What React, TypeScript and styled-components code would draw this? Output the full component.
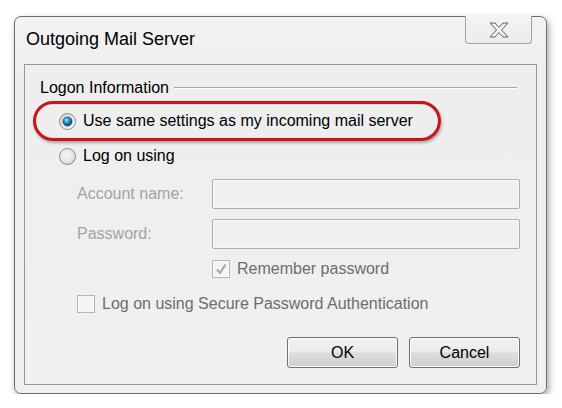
import React, { ReactElement } from 'react';
import styled, { createGlobalStyle } from 'styled-components';

const GlobalStyle = createGlobalStyle`
  body {
    margin: 0;
    background: #ffffff;
    font-family: "Liberation Sans", Arial, sans-serif;
    font-size: 16px;
    color: #000;
  }
`;

const Page = styled.div`
  padding: 16px 0 0 14px;
`;

const Window = styled.div`
  width: 533px;
  height: 378px;
  box-sizing: border-box;
  border: 1px solid #6c6c6c;
  border-radius: 7px;
  background: linear-gradient(#f3f3f3, #eeeeee 60px, #f0f0f0);
  box-shadow: 2px 3px 7px rgba(0, 0, 0, 0.35);
  display: flex;
  flex-direction: column;
  padding: 0 9px 8px 9px;
`;

const TitleBar = styled.div`
  height: 47px;
  display: flex;
  align-items: flex-start;
  justify-content: space-between;
`;

const Title = styled.div`
  margin: 11px 0 0 2px;
  font-size: 18px;
  line-height: 22px;
`;

const CloseButton = styled.div`
  width: 67px;
  height: 28px;
  margin: -1px 5px 0 0;
  box-sizing: border-box;
  border: 1px solid #a2a2a2;
  border-top: none;
  border-radius: 0 0 4px 4px;
  background: linear-gradient(#f4f4f4, #ececec);
  display: flex;
  align-items: center;
  justify-content: center;
`;

const Panel = styled.div`
  flex: 1;
  border: 1px solid #979797;
  display: flex;
  flex-direction: column;
`;

const GroupHeader = styled.div`
  margin: 14px 19px 0 15px;
  height: 18px;
  display: flex;
  align-items: center;
  line-height: 18px;
`;

const GroupLine = styled.div`
  flex: 1;
  margin-left: 5px;
  border-top: 1px solid #a6a6a6;
  border-bottom: 1px solid #ffffff;
`;

const Highlight = styled.div`
  margin: 4px 0 0 8px;
  width: 408px;
  height: 40px;
  box-sizing: border-box;
  border: 3px solid #c8141f;
  border-radius: 20px;
  box-shadow: 1px 2px 3px rgba(0, 0, 0, 0.3), inset 0 0 1px rgba(120, 0, 0, 0.4);
  padding-left: 23px;
  display: flex;
  align-items: center;
`;

const OptionRow = styled.div<{ $top?: number; $left?: number; $muted?: boolean }>`
  margin-top: ${(p) => p.$top ?? 0}px;
  margin-left: ${(p) => p.$left ?? 0}px;
  height: 18px;
  display: flex;
  align-items: center;
  gap: 7px;
  line-height: 18px;
  color: ${(p) => (p.$muted ? '#6d6d6d' : '#000')};
`;

const FieldRow = styled.div<{ $top: number }>`
  margin: ${(p) => p.$top}px 16px 0 52px;
  display: flex;
  align-items: center;
`;

const FieldLabel = styled.label`
  width: 135px;
  color: #a3a3a3;
  line-height: 18px;
`;

const TextBox = styled.div`
  flex: 1;
  height: 30px;
  box-sizing: border-box;
  border: 1px solid #b0b0b0;
  border-radius: 2px;
  background: #f0f0f0;
  box-shadow: inset 0 0 0 1px #f7f7f7;
`;

const CheckBox = styled.div`
  width: 18px;
  height: 18px;
  box-sizing: border-box;
  border: 1px solid #b6b6b6;
  background: #f4f4f4;
  box-shadow: inset 0 0 0 1px #fafafa;
  display: flex;
  align-items: center;
  justify-content: center;
`;

const ButtonRow = styled.div`
  margin: auto 16px 16px 0;
  display: flex;
  justify-content: flex-end;
  gap: 11px;
`;

const Button = styled.button`
  width: 111px;
  height: 31px;
  border: 1px solid #707070;
  border-radius: 3px;
  background: linear-gradient(#f2f2f2 0%, #ebebeb 48%, #dddddd 52%, #cfcfcf 100%);
  box-shadow: inset 0 0 0 1px #fbfbfb;
  font-family: "Liberation Sans", Arial, sans-serif;
  font-size: 16px;
  color: #000;
  padding: 0;
`;

const Radio = ({ checked }: { checked?: boolean }): ReactElement => (
  <svg width="17" height="17" viewBox="0 0 17 17">
    <defs>
      <linearGradient id={checked ? 'ringOn' : 'ringOff'} x1="0" y1="0" x2="1" y2="1">
        <stop offset="0" stopColor="#cfcfcf" />
        <stop offset="1" stopColor="#ffffff" />
      </linearGradient>
      <radialGradient id="fillOff" cx="0.45" cy="0.4" r="0.6">
        <stop offset="0" stopColor="#f6f6f6" />
        <stop offset="0.7" stopColor="#e6e6e6" />
        <stop offset="1" stopColor="#cdcdcd" />
      </radialGradient>
      <radialGradient id="dotOn" cx="0.4" cy="0.35" r="0.65">
        <stop offset="0" stopColor="#a8ecff" />
        <stop offset="0.35" stopColor="#2fa7de" />
        <stop offset="0.8" stopColor="#0e5a92" />
        <stop offset="1" stopColor="#0a3a64" />
      </radialGradient>
    </defs>
    <circle cx="8.5" cy="8.5" r="8" fill={checked ? 'url(#ringOn)' : 'url(#fillOff)'} stroke="#8a8a8a" />
    {checked && <circle cx="8.5" cy="8.5" r="4.6" fill="url(#dotOn)" stroke="#1b3f5e" strokeWidth="0.6" />}
  </svg>
);

const CloseIcon = (): ReactElement => (
  <svg width="20" height="16" viewBox="0 0 20 16">
    <path
      d="M1 1 H6 L10 5.5 L14 1 H19 L12.5 8 L19 15 H14 L10 10.5 L6 15 H1 L7.5 8 Z"
      fill="#f2f2f2"
      stroke="#5b5f66"
      strokeWidth="1"
      strokeLinejoin="round"
    />
  </svg>
);

const CheckMark = (): ReactElement => (
  <svg width="14" height="14" viewBox="0 0 14 14">
    <path d="M3 7.5 L6 11 L11.5 2.5" fill="none" stroke="#a9a9a9" strokeWidth="2.2" strokeLinejoin="round" />
  </svg>
);

const App = (): ReactElement => (
  <Page>
    <GlobalStyle />
    <Window>
      <TitleBar>
        <Title>Outgoing Mail Server</Title>
        <CloseButton>
          <CloseIcon />
        </CloseButton>
      </TitleBar>
      <Panel>
        <GroupHeader>
          Logon Information
          <GroupLine />
        </GroupHeader>
        <Highlight>
          <OptionRow>
            <Radio checked />
            Use same settings as my incoming mail server
          </OptionRow>
        </Highlight>
        <OptionRow $top={6} $left={34}>
          <Radio />
          Log on using
        </OptionRow>
        <FieldRow $top={14}>
          <FieldLabel>Account name:</FieldLabel>
          <TextBox />
        </FieldRow>
        <FieldRow $top={10}>
          <FieldLabel>Password:</FieldLabel>
          <TextBox />
        </FieldRow>
        <OptionRow $top={11} $left={187} $muted>
          <CheckBox>
            <CheckMark />
          </CheckBox>
          Remember password
        </OptionRow>
        <OptionRow $top={17} $left={52} $muted>
          <CheckBox />
          Log on using Secure Password Authentication
        </OptionRow>
        <ButtonRow>
          <Button>OK</Button>
          <Button>Cancel</Button>
        </ButtonRow>
      </Panel>
    </Window>
  </Page>
);

export default App;
